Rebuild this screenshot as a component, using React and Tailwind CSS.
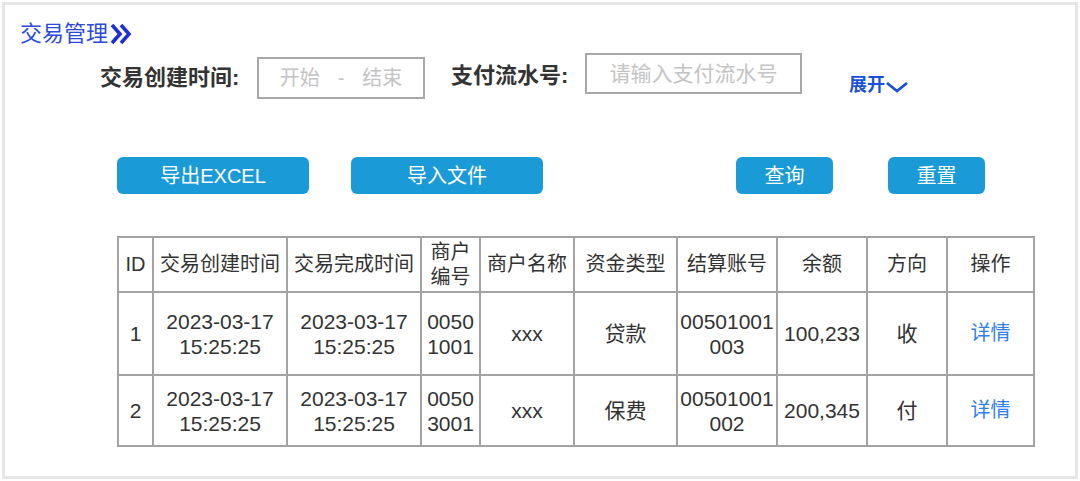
import React from 'react';

const cjk = { fontFamily: '"Liberation Sans", "Noto Sans CJK SC", sans-serif' };

const cols = [35, 134, 134, 59, 94, 103, 100, 90, 80, 87];

const headers = ['ID', '交易创建时间', '交易完成时间', ['商户', '编号'], '商户名称', '资金类型', '结算账号', '余额', '方向', '操作'];

const rows = [
  {
    h: 'h-[83px]',
    cells: ['1', ['2023-03-17', '15:25:25'], ['2023-03-17', '15:25:25'], ['0050', '1001'], 'xxx', '贷款', ['00501001', '003'], '100,233', '收'],
  },
  {
    h: 'h-[71px]',
    cells: ['2', ['2023-03-17', '15:25:25'], ['2023-03-17', '15:25:25'], ['0050', '3001'], 'xxx', '保费', ['00501001', '002'], '200,345', '付'],
  },
];

const Lines = ({ v }) =>
  Array.isArray(v) ? (
    <>
      {v[0]}
      <br />
      {v[1]}
    </>
  ) : (
    v
  );

const Btn = ({ children, className }) => (
  <button className={`h-[37px] rounded-[6px] bg-[#1a9bd7] text-white text-[20px] leading-none ${className}`}>
    {children}
  </button>
);

export default function App() {
  return (
    <div className="w-[1080px] h-[481px] bg-white p-[2px]" style={cjk}>
      <div className="h-full border-[3px] border-[#e6e6e6]">
        {/* title */}
        <div className="pl-[15px] pt-[15px] flex items-center h-[43px]">
          <span className="text-[22px] leading-[28px] text-[#2b49e0]">交易管理</span>
          <svg width="24" height="24" viewBox="0 0 24 24" className="ml-[1px]">
            <path d="M3 3 L11 12 L3 21" fill="none" stroke="#1c2fd6" strokeWidth="3.6" />
            <path d="M12 3 L20 12 L12 21" fill="none" stroke="#1c2fd6" strokeWidth="3.6" />
          </svg>
        </div>

        {/* filters */}
        <div className="mt-[5px] pl-[95px] flex items-start">
          <span className="w-[157px] mt-[11px] text-[22px] leading-[28px] font-bold text-[#333]">交易创建时间:</span>
          <div className="mt-[4px] w-[168px] h-[42px] border-2 border-[#a8a8a8] flex items-center justify-center text-[20px] text-[#c4c4c4]">
            <span>开始</span>
            <span className="mx-[18px]">-</span>
            <span>结束</span>
          </div>
          <span className="ml-[26px] w-[134px] mt-[9px] text-[22px] leading-[28px] font-bold text-[#333]">支付流水号:</span>
          <div className="w-[217px] h-[41px] border-2 border-[#a8a8a8] flex items-center justify-center text-[21px] text-[#c4c4c4]">
            请输入支付流水号
          </div>
          <div className="ml-[47px] mt-[20px] flex items-center text-[#1a4fd8]">
            <span className="text-[18px] leading-[24px] font-bold">展开</span>
            <svg width="24" height="14" viewBox="0 0 24 14" className="mt-[4px]">
              <path d="M2 3 L12 11 L22 3" fill="none" stroke="#1a4fd8" strokeWidth="2.8" />
            </svg>
          </div>
        </div>

        {/* buttons */}
        <div className="mt-[58px] pl-[112px] flex">
          <Btn className="w-[192px]">导出EXCEL</Btn>
          <Btn className="w-[192px] ml-[42px]">导入文件</Btn>
          <Btn className="w-[97px] ml-[193px]">查询</Btn>
          <Btn className="w-[97px] ml-[55px]">重置</Btn>
        </div>

        {/* table */}
        <table className="mt-[42px] ml-[112px] w-[916px] table-fixed border-collapse border-2 border-[#a3a3a3] text-[21px] leading-[25px] text-[#333]">
          <colgroup>
            {cols.map((w, i) => (
              <col key={i} style={{ width: w }} />
            ))}
          </colgroup>
          <thead>
            <tr>
              {headers.map((h, i) => (
                <th key={i} className="h-[55px] border-2 border-[#a3a3a3] font-normal text-[20px] text-center p-0 whitespace-nowrap">
                  <Lines v={h} />
                </th>
              ))}
            </tr>
          </thead>
          <tbody>
            {rows.map((r, ri) => (
              <tr key={ri}>
                {r.cells.map((c, ci) => (
                  <td key={ci} className={`${r.h} border-2 border-[#a3a3a3] text-center p-0 whitespace-nowrap`}>
                    <Lines v={c} />
                  </td>
                ))}
                <td className={`${r.h} border-2 border-[#a3a3a3] text-center p-0 text-[20px] text-[#2f80e8]`}>详情</td>
              </tr>
            ))}
          </tbody>
        </table>
      </div>
    </div>
  );
}
